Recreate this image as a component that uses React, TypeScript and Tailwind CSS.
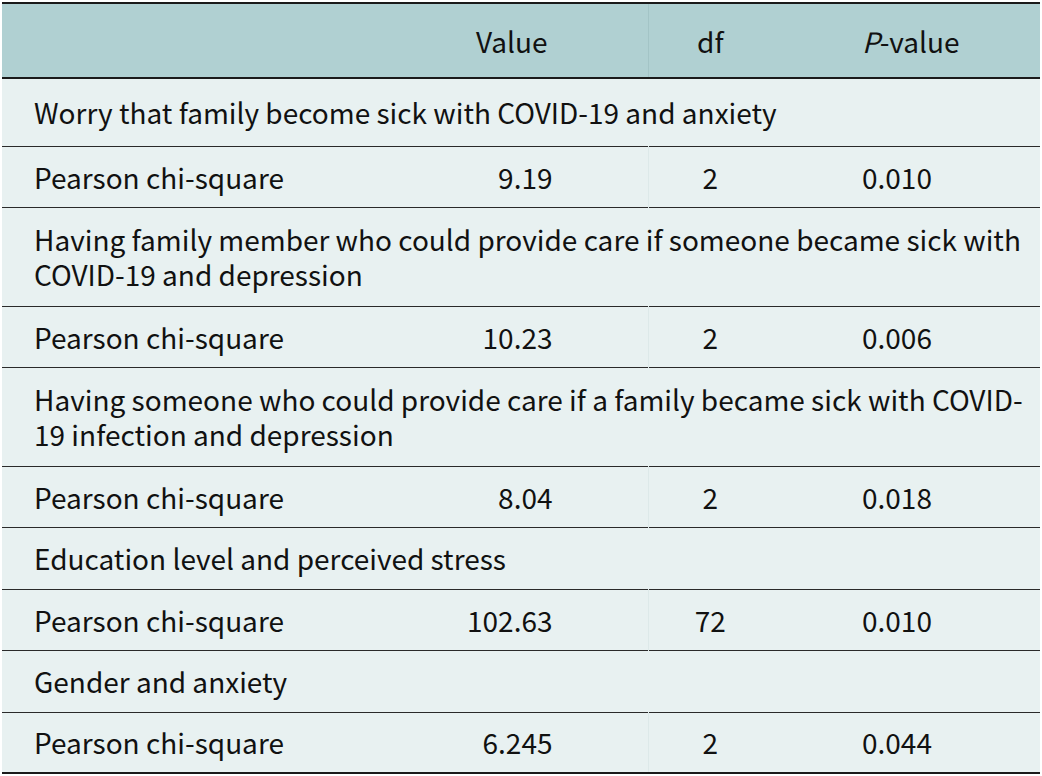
const rows: { label: string[]; value: string; df: string; p: string }[] = [
  { label: ['Worry that family become sick with COVID-19 and anxiety'], value: '9.19', df: '2', p: '0.010' },
  {
    label: [
      'Having family member who could provide care if someone became sick with',
      'COVID-19 and depression',
    ],
    value: '10.23',
    df: '2',
    p: '0.006',
  },
  {
    label: [
      'Having someone who could provide care if a family became sick with COVID-',
      '19 infection and depression',
    ],
    value: '8.04',
    df: '2',
    p: '0.018',
  },
  { label: ['Education level and perceived stress'], value: '102.63', df: '72', p: '0.010' },
  { label: ['Gender and anxiety'], value: '6.245', df: '2', p: '0.044' },
];

export default function App() {
  return (
    <div
      className="w-[1042px] h-[776px] bg-white pt-[2px] px-[2px] text-[#111] text-[28px]"
      style={{ fontFamily: '"Noto Sans CJK SC", "Noto Sans", sans-serif' }}
    >
      <table className="w-[1038px] border-collapse table-fixed">
        <colgroup>
          <col className="w-[374px]" />
          <col className="w-[272px]" />
          <col className="w-[124px]" />
          <col className="w-[268px]" />
        </colgroup>
        <thead>
          <tr className="bg-[#b0d0d2] h-[75px] border-t-2 border-b-2 border-[#1a1a1a]">
            <th className="font-normal"></th>
            <th className="font-normal text-center">Value</th>
            <th className="font-normal text-center border-l border-[#a3c4c6]">df</th>
            <th className="font-normal text-left pl-[90px]">
              <i>P</i>-value
            </th>
          </tr>
        </thead>
        <tbody className="bg-[#e8f1f1]">
          {rows.map((r, i) => (
            <>
              <tr key={'h' + i} className="border-b border-[#2a2a2a]">
                <td
                  colSpan={4}
                  className={
                    'pl-[32px] leading-[35px] ' +
                    (r.label.length > 1 ? 'h-[99px]' : i === 0 ? 'h-[68px]' : 'h-[62px]')
                  }
                >
                  {r.label.map((l, j) => (
                    <div key={j} className="whitespace-nowrap">
                      {l}
                    </div>
                  ))}
                </td>
              </tr>
              <tr key={'d' + i} className={i === rows.length - 1 ? 'border-b-2 border-[#1a1a1a]' : 'border-b border-[#2a2a2a]'}>
                <td className="h-[61px] pl-[32px]">Pearson chi-square</td>
                <td className="text-right pr-[95px]">{r.value}</td>
                <td className="text-center border-l border-[#dde9e9]">{r.df}</td>
                <td className="text-left pl-[90px]">{r.p}</td>
              </tr>
            </>
          ))}
        </tbody>
      </table>
    </div>
  );
}
